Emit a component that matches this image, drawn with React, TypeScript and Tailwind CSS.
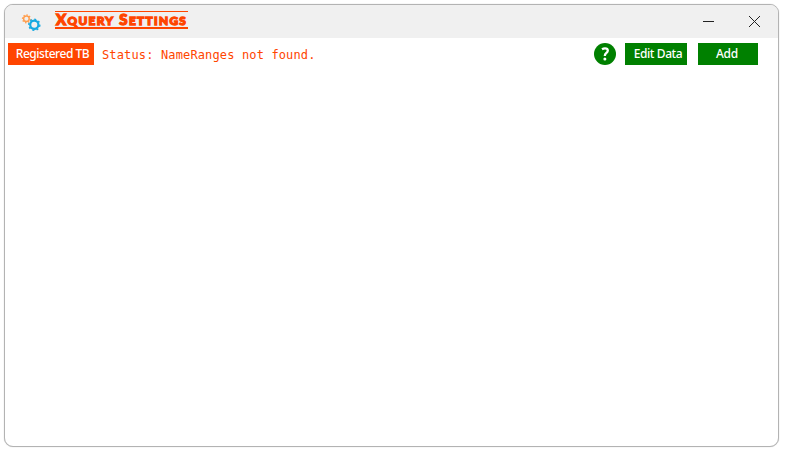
import React from "react";

function Gear({ cx, cy, r, color, teeth, width }: { cx: number; cy: number; r: number; color: string; teeth: number; width: number }) {
  return (
    <g transform={`translate(${cx} ${cy})`} stroke={color} fill="none">
      <circle r={r} strokeWidth={width} />
      {Array.from({ length: teeth }, (_, i) => (
        <path key={i} d={`M0 ${-r - width / 2 + 0.3}v-1.3`} strokeWidth={width * 0.95} transform={`rotate(${(i * 360) / teeth + 10})`} />
      ))}
    </g>
  );
}

function TitleBar() {
  return (
    <header className="flex h-[33px] shrink-0 items-start bg-[#f0f0f0]">
      <svg className="mt-[8px] ml-[16px] shrink-0" width="22" height="20" viewBox="0 0 22 20">
        <Gear cx={5.4} cy={5.8} r={2.8} color="#ff9f50" teeth={8} width={1.5} />
        <Gear cx={13.3} cy={11.8} r={4.1} color="#16a9e1" teeth={8} width={2.2} />
      </svg>
      <h1 className="mt-[6px] ml-[12px] flex h-[18px] w-[133px] items-center border-t border-b-2 border-[#ff4500] font-['Lato'] leading-none font-black whitespace-nowrap text-[#ff4500] uppercase">
        <span className="pl-[1px] text-[15px] tracking-[1.35px] [-webkit-text-stroke:1.3px_#ff4500]">
          X<span className="text-[11.8px]">query</span> S<span className="text-[11.8px]">ettings</span>
        </span>
      </h1>
      <div className="mt-[10px] mr-[17px] ml-auto flex gap-[33px] text-[#222]">
        <svg width="13" height="13" viewBox="0 0 13 13" shapeRendering="crispEdges">
          <path d="M1 6.5h11" stroke="currentColor" />
        </svg>
        <svg width="13" height="13" viewBox="0 0 13 13">
          <path d="M1 1l11 11M12 1L1 12" stroke="currentColor" />
        </svg>
      </div>
    </header>
  );
}

function Toolbar() {
  return (
    <div className="flex items-start pt-[5px] pr-[20px] pl-[3px] font-['Noto_Sans'] text-[12px] leading-[22px] text-white">
      <button className="h-[22px] w-[86px] bg-[#ff4500] pl-[3px] font-medium tracking-[-0.45px] whitespace-nowrap">Registered TB</button>
      <p className="mt-[1px] ml-[8px] font-['DejaVu_Sans_Mono'] text-[12px] tracking-[0.14px] whitespace-pre text-[#ff4500]">Status: NameRanges not found.</p>
      <svg className="ml-auto shrink-0" width="22" height="22" viewBox="0 0 22 22">
        <circle cx="11" cy="11" r="11" fill="#008000" />
        <path d="M8 6.2C9 5.6 10 5.3 11 5.3c1.7 0 2.8.8 2.8 2.3 0 2.4-3 2.4-3 5.4" fill="none" stroke="#fff" strokeWidth="2.3" />
        <circle cx="10.9" cy="16" r="1.5" fill="#fff" />
      </svg>
      <button className="ml-[9px] h-[22px] w-[62px] bg-[#008000] pl-[4px] font-medium tracking-[-0.4px] whitespace-nowrap">Edit Data</button>
      <button className="ml-[11px] h-[22px] w-[60px] bg-[#008000] pr-[2px] font-medium tracking-[-0.2px]">Add</button>
    </div>
  );
}

export default function App() {
  return (
    <div className="h-[452px] w-[786px] bg-white pt-[4px] pl-[4px]">
      <main className="flex h-[443px] w-[775px] flex-col overflow-hidden rounded-[9px] border border-[#b3b3b3] bg-white shadow-[0_0_1px_#bbb]">
        <TitleBar />
        <Toolbar />
      </main>
    </div>
  );
}
